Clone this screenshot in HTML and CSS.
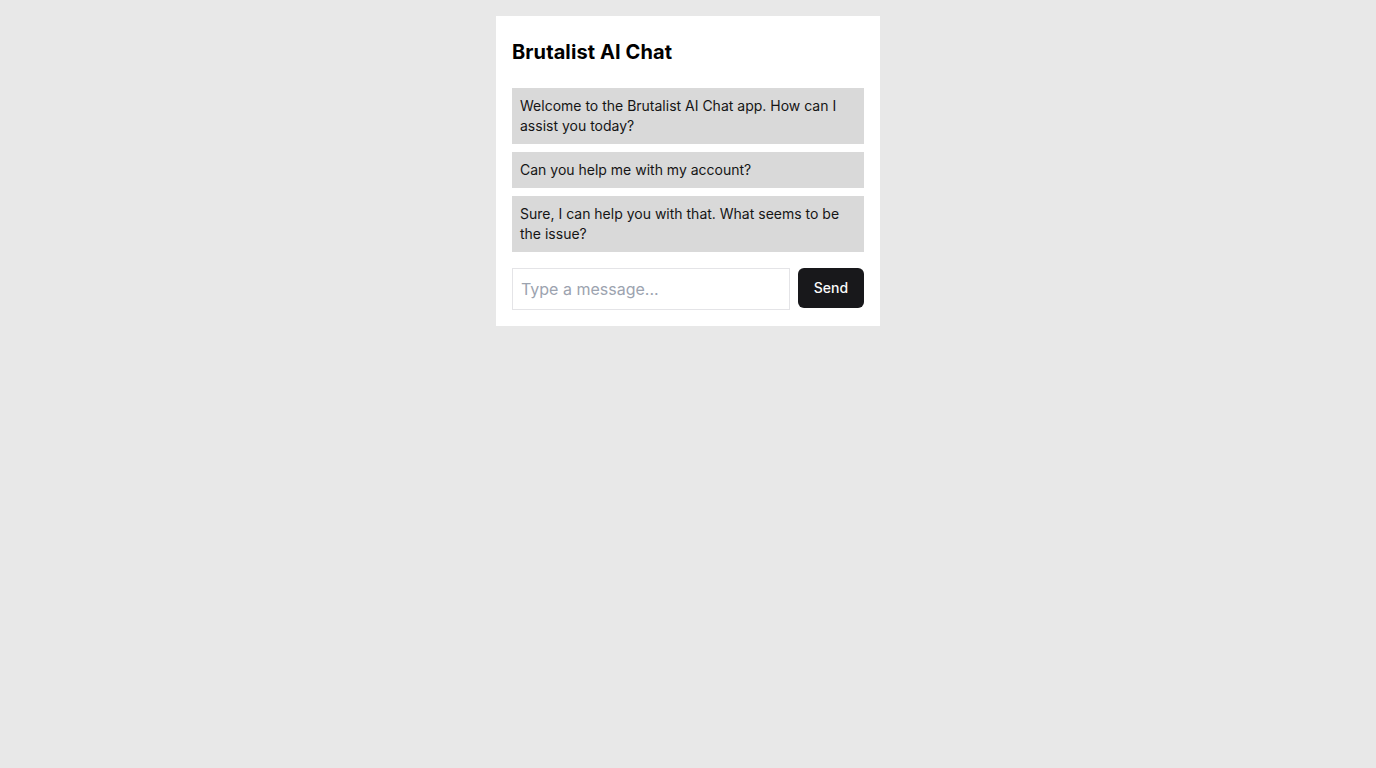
FILE: index.html
```html
<!DOCTYPE html>
<html lang="en">
<head>
<meta charset="utf-8">
<title>Brutalist AI Chat</title>
<link rel="stylesheet" href="styles.css">
</head>
<body>
<main class="chat">
  <h1 class="chat-title">Brutalist AI Chat</h1>
  <div class="messages">
    <div class="message">Welcome to the Brutalist AI Chat app. How can I assist you today?</div>
    <div class="message">Can you help me with my account?</div>
    <div class="message">Sure, I can help you with that. What seems to be the issue?</div>
  </div>
  <form class="composer">
    <input class="composer-input" type="text" placeholder="Type a message...">
    <button class="composer-send" type="button">Send</button>
  </form>
</main>
</body>
</html>
```
FILE: styles.css
```css
* { box-sizing: border-box; }
html, body { margin: 0; padding: 0; }
body {
  background: #e8e8e8;
  font-family: Inter, "Noto Sans", sans-serif;
  color: #111;
  display: flex;
  justify-content: center;
  padding-top: 16px;
  min-height: 768px;
}
.chat {
  width: 384px;
  background: #fff;
  padding: 16px;
  align-self: flex-start;
  display: flex;
  flex-direction: column;
}
.chat-title {
  margin: 2px 0 18px;
  font-size: 20px;
  line-height: 36px;
  font-weight: 700;
  letter-spacing: 0.1px;
  color: #000;
}
.messages {
  display: flex;
  flex-direction: column;
  gap: 8px;
  margin-bottom: 16px;
}
.message {
  background: #d9d9d9;
  padding: 8px;
  font-size: 14px;
  line-height: 20px;
  color: #151515;
}
.composer {
  display: flex;
  gap: 8px;
  align-items: flex-start;
  margin: 0;
}
.composer-input {
  flex: 1;
  min-width: 0;
  height: 42px;
  border: 1px solid #e4e4e7;
  border-radius: 0;
  padding: 8px;
  font-family: inherit;
  font-size: 16px;
  line-height: 24px;
  color: #111;
  outline: none;
}
.composer-input::placeholder { color: #9ca3af; }
.composer-send {
  height: 40px;
  width: 66px;
  border: 0;
  border-radius: 6px;
  background: #18181b;
  color: #fafafa;
  font-family: inherit;
  font-size: 14px;
  font-weight: 500;
  line-height: 20px;
  padding: 0;
  cursor: pointer;
}
```
